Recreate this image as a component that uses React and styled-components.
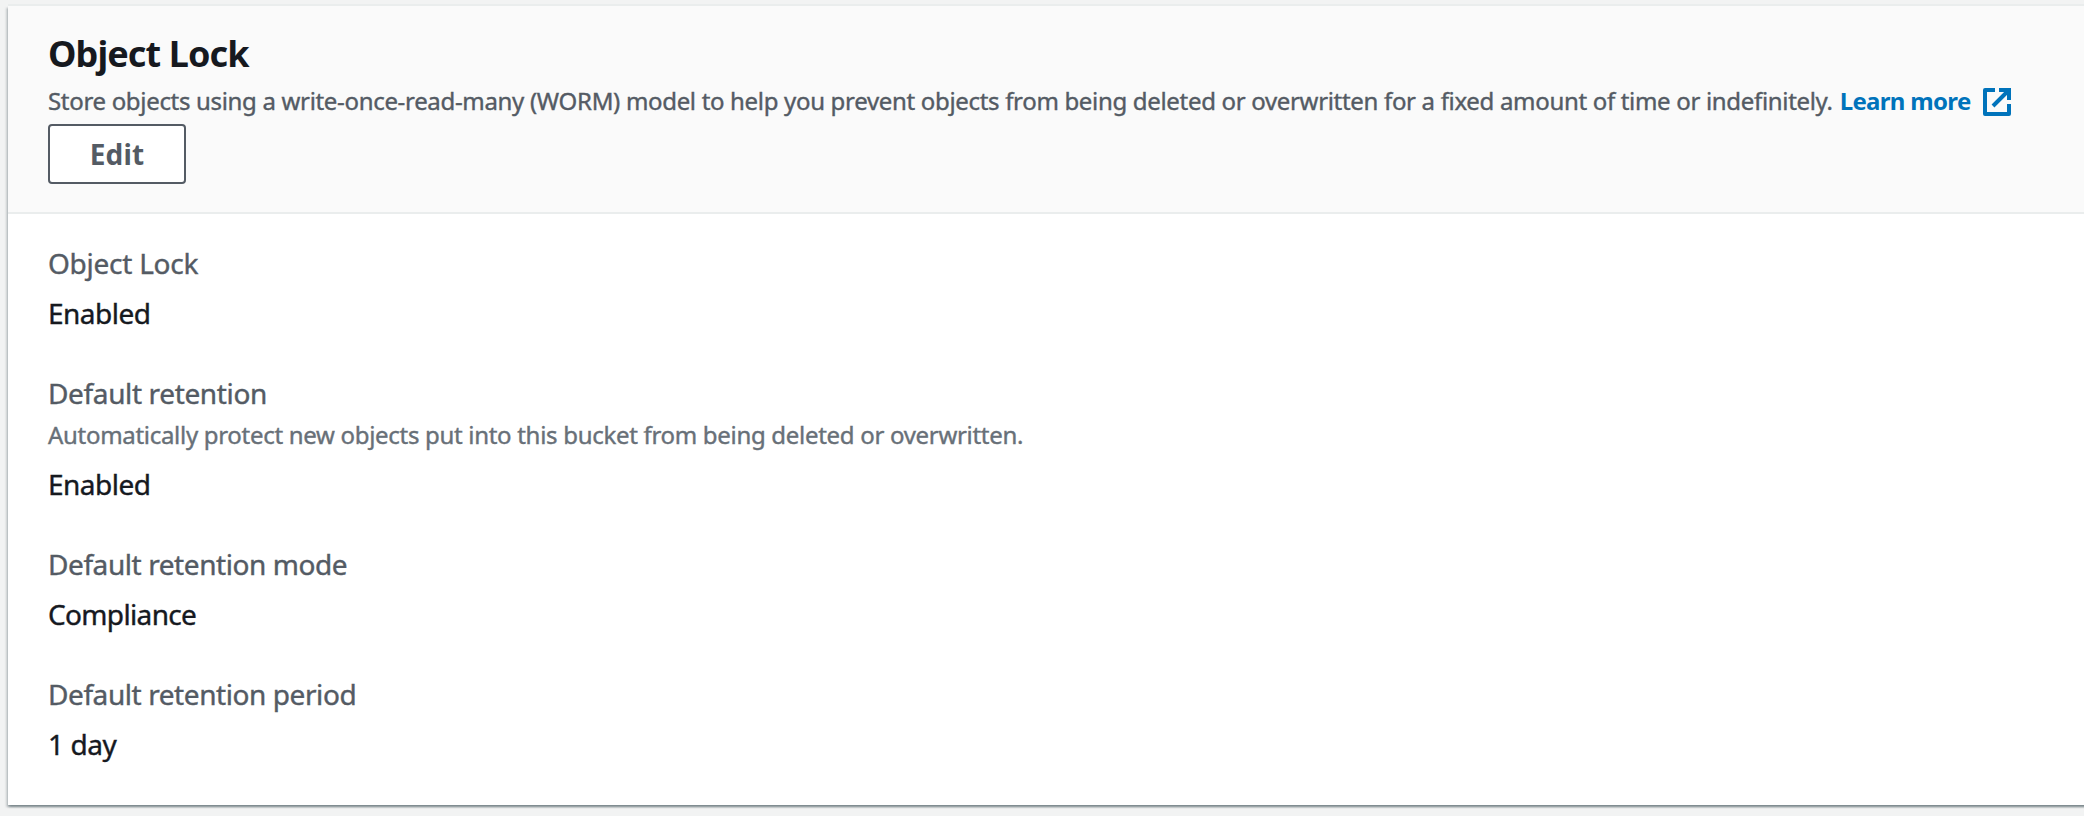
import React from 'react';
import styled, { createGlobalStyle } from 'styled-components';

const GlobalStyle = createGlobalStyle`
  * { box-sizing: border-box; }
  body {
    margin: 0;
    background: #f2f3f3;
    color: #16191f;
    font-family: 'Noto Sans', 'Open Sans', sans-serif;
    overflow: hidden;
  }
`;

const Page = styled.main`
  height: 816px;
  padding: 6px 0 11px 8px;
  overflow: hidden;
`;

const Panel = styled.section`
  width: 2100px;
  height: 799px;
  background: #fff;
  box-shadow: 0 2px 2px 0 rgba(0, 28, 36, 0.3), 2px 2px 2px 0 rgba(0, 28, 36, 0.15),
    -2px 2px 2px 0 rgba(0, 28, 36, 0.15), 0 -2px 0 0 #eaeded;
`;

const Header = styled.header`
  height: 208px;
  padding: 26px 40px 0;
  background: #fafafa;
  border-bottom: 2px solid #eaeded;
`;

const Title = styled.h2`
  margin: 0;
  font-size: 36px;
  font-weight: 700;
  line-height: 44px;
  letter-spacing: -0.9px;
`;

const Description = styled.p`
  display: flex;
  align-items: center;
  margin: 4px 0 2px;
  color: #545b64;
  font-size: 24px;
  line-height: 42px;
  letter-spacing: -0.32px;
  white-space: pre;
  -webkit-text-stroke: 0.4px currentColor;
`;

const LearnMore = styled.a`
  display: inline-flex;
  align-items: center;
  gap: 12px;
  margin-left: 7px;
  color: #0073bb;
  font-weight: 700;
  letter-spacing: -0.68px;
  text-decoration: none;
  -webkit-text-stroke: 0;
`;

const ExternalIcon = styled.svg`
  width: 28px;
  height: 28px;
  margin-top: 2px;
`;

const Button = styled.button`
  display: block;
  width: 138px;
  height: 60px;
  padding: 0;
  border: 2px solid #545b64;
  border-radius: 4px;
  background: #fff;
  color: #545b64;
  font: 700 28px/40px 'Noto Sans', sans-serif;
  letter-spacing: 0.2px;
`;

const Body = styled.dl`
  display: flex;
  flex-direction: column;
  gap: 36px;
  margin: 0;
  padding: 27px 40px 0;
`;

const Field = styled.div`
  font-size: 28px;
  line-height: 44px;
  -webkit-text-stroke: 0.4px currentColor;
`;

const Label = styled.dt`
  color: #545b64;
  letter-spacing: ${(p) => p.$spacing}px;
`;

const Hint = styled.dd`
  margin: 0;
  padding-bottom: 1px;
  color: #687078;
  font-size: 24px;
  line-height: 40px;
  letter-spacing: -0.3px;
`;

const Value = styled.dd`
  margin: 6px 0 0;
  letter-spacing: ${(p) => p.$spacing}px;
`;

const fields = [
  { label: 'Object Lock', value: 'Enabled', ls: -0.25, vs: -0.5 },
  {
    label: 'Default retention',
    hint: 'Automatically protect new objects put into this bucket from being deleted or overwritten.',
    value: 'Enabled',
    ls: -0.36,
    vs: -0.5,
  },
  { label: 'Default retention mode', value: 'Compliance', ls: -0.42, vs: -0.65 },
  { label: 'Default retention period', value: '1 day', ls: -0.42, vs: -0.4 },
];

export default function App() {
  return (
    <>
      <GlobalStyle />
      <Page>
        <Panel>
          <Header>
            <Title>Object Lock</Title>
            <Description>
              <span>
                Store objects using a write-once-read-many (WORM) model to help you prevent objects from being deleted or overwritten for a fixed amount of time or indefinitely.
              </span>
              <LearnMore href="#">
                Learn more
                <ExternalIcon viewBox="0 0 28 28" fill="none" stroke="currentColor" strokeWidth="4">
                  <path d="M12 2H2v24h24V16" strokeLinejoin="round" />
                  <path d="M16 2h10v10M25.5 2.500 10 18" />
                </ExternalIcon>
              </LearnMore>
            </Description>
            <Button>Edit</Button>
          </Header>
          <Body>
            {fields.map((f) => (
              <Field key={f.label}>
                <Label $spacing={f.ls}>{f.label}</Label>
                {f.hint && <Hint>{f.hint}</Hint>}
                <Value $spacing={f.vs}>{f.value}</Value>
              </Field>
            ))}
          </Body>
        </Panel>
      </Page>
    </>
  );
}
